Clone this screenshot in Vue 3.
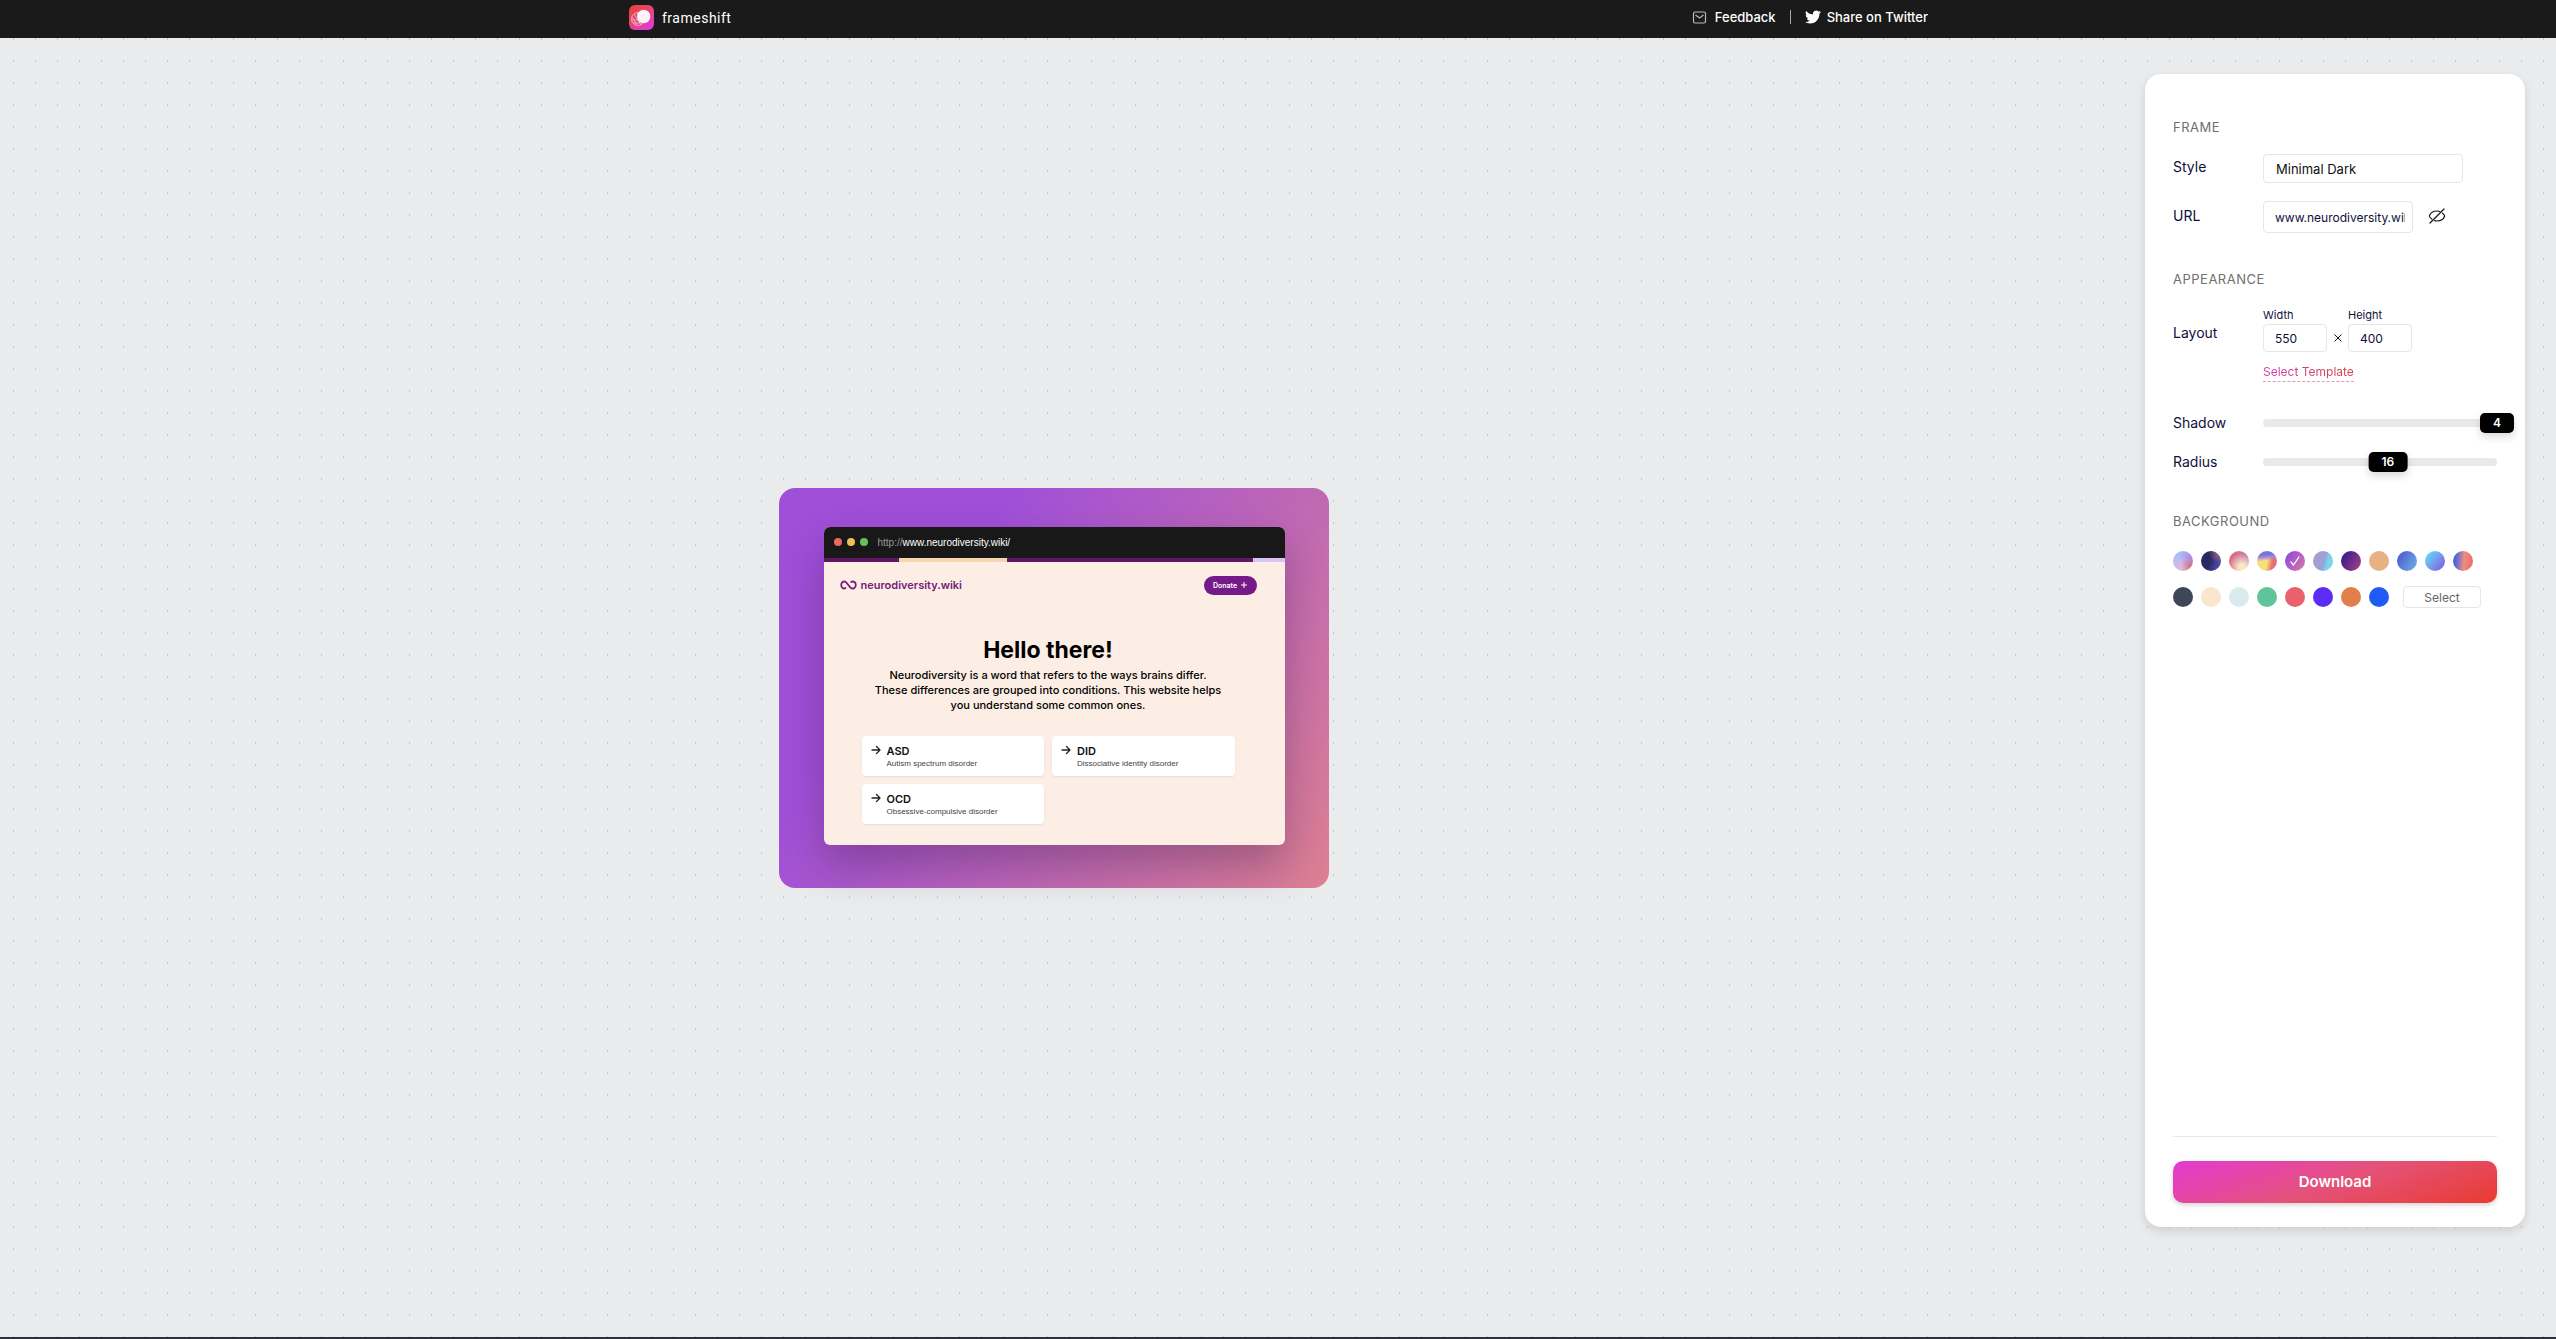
<script setup>
import { ref, computed } from 'vue'

const frameStyle = ref('Minimal Dark')
const url = ref('www.neurodiversity.wiki/')
const width = ref(550)
const height = ref(400)
const shadow = ref(4)
const radius = ref(16)
const picked = ref('grape')

const gradients = [
  { id: 'mist', label: 'Mist' },
  { id: 'night', label: 'Night' },
  { id: 'rose', label: 'Rose' },
  { id: 'sunrise', label: 'Sunrise' },
  { id: 'grape', label: 'Grape' },
  { id: 'lagoon', label: 'Lagoon' },
  { id: 'plum', label: 'Plum' },
  { id: 'sand', label: 'Sand' },
  { id: 'ocean', label: 'Ocean' },
  { id: 'sky', label: 'Sky' },
  { id: 'coral', label: 'Coral' }
]
const solids = [
  { id: 'slate', label: 'Slate' },
  { id: 'cream', label: 'Cream' },
  { id: 'ice', label: 'Ice' },
  { id: 'mint', label: 'Mint' },
  { id: 'red', label: 'Red' },
  { id: 'violet', label: 'Violet' },
  { id: 'orange', label: 'Orange' },
  { id: 'blue', label: 'Blue' }
]
const conditions = [
  { name: 'ASD', text: 'Autism spectrum disorder' },
  { name: 'DID', text: 'Dissociative identity disorder' },
  { name: 'OCD', text: 'Obsessive-compulsive disorder' }
]
const shadowLeft = computed(() => (shadow.value / 4) * 100 + '%')
const radiusLeft = computed(() => (radius.value / 30) * 100 + '%')
const cardSize = computed(() => ({ width: width.value + 'px', minHeight: height.value + 'px' }))
</script>

<template>
  <div class="app">
    <header class="top">
      <div class="top-inner">
        <a class="brand" href="#">
          <svg width="25" height="25" viewBox="0 0 25 25" aria-hidden="true">
            <defs>
              <linearGradient id="brand-fill" x1="0" y1="0" x2="0.7" y2="1">
                <stop offset="0" stop-color="#e83f34" />
                <stop offset="0.5" stop-color="#e4486f" />
                <stop offset="1" stop-color="#e03bd2" />
              </linearGradient>
            </defs>
            <rect width="25" height="25" rx="6" fill="url(#brand-fill)" />
            <g fill="none" stroke="#f6b9c0" stroke-width="0.8">
              <circle cx="9" cy="14" r="6.5" />
              <path d="M3 12l5 8M5 9l7 11M8 8l7 10M3 15h7M4 18h9" />
            </g>
            <circle cx="14.700" cy="11.500" r="6.700" fill="#fff" fill-opacity="0.930" />
          </svg>
          <span>frameshift</span>
        </a>
        <nav class="links">
          <a href="#">
            <svg width="15" height="15" viewBox="0 0 15 15" fill="none" stroke="#b9b9b9" stroke-width="1.200" aria-hidden="true">
              <rect x="1.500" y="2" width="12" height="11" rx="1.500" />
              <path d="M3.500 5l4 3 4-3" />
            </svg>
            <span>Feedback</span>
          </a>
          <i class="bar"></i>
          <a href="#">
            <svg width="16" height="16" viewBox="0 0 24 24" fill="#fff" aria-hidden="true">
              <path d="M23.953 4.570a10 10 0 01-2.825.775 4.958 4.958 0 002.163-2.723c-.951.555-2.005.959-3.127 1.184a4.920 4.920 0 00-8.384 4.482C7.690 8.095 4.067 6.130 1.640 3.162a4.822 4.822 0 00-.666 2.475c0 1.710.870 3.213 2.188 4.096a4.904 4.904 0 01-2.228-.616v.060a4.923 4.923 0 003.946 4.827 4.996 4.996 0 01-2.212.085 4.936 4.936 0 004.604 3.417 9.867 9.867 0 01-6.102 2.105c-.390 0-.779-.023-1.170-.067a13.995 13.995 0 007.557 2.209c9.053 0 13.998-7.496 13.998-13.985 0-.210 0-.420-.015-.630A9.935 9.935 0 0024 4.590z" />
            </svg>
            <span>Share on Twitter</span>
          </a>
        </nav>
      </div>
    </header>

    <main class="work">
      <section class="stage">
        <div class="card" :style="cardSize">
          <div class="window">
            <div class="titlebar">
              <i class="dot close"></i><i class="dot min"></i><i class="dot max"></i>
              <span class="address"><span class="scheme">http://</span>www.neurodiversity.wiki/</span>
            </div>
            <div class="stripe"><i class="s1"></i><i class="s2"></i><i class="s3"></i><i class="s4"></i></div>
            <div class="site">
              <div class="site-top">
                <div class="site-brand">
                  <svg width="17" height="10" viewBox="0 0 17 10" fill="none" stroke="#74207c" stroke-width="1.800" stroke-linecap="round" aria-hidden="true">
                    <path d="M5.500 8C3.500 9.300 1.200 8 1.200 5s2.300-4.300 4.500-3C7.700 3.200 9 6.800 11 8c2.200 1.300 4.800 0 4.800-3s-2.600-4.300-4.600-3" />
                  </svg>
                  <span>neurodiversity.wiki</span>
                </div>
                <button class="donate" type="button">Donate
                  <svg width="6" height="6" viewBox="0 0 6 6" stroke="#fff" stroke-width="1" aria-hidden="true"><path d="M3 0v6M0 3h6" /></svg>
                </button>
              </div>
              <h1>Hello there!</h1>
              <p class="lead">Neurodiversity is a word that refers to the ways brains differ.<br>These differences are grouped into conditions. This website helps<br>you understand some common ones.</p>
              <div class="tiles">
                <article v-for="c in conditions" :key="c.name" class="tile">
                  <svg width="10" height="10" viewBox="0 0 10 10" fill="none" stroke="#222" stroke-width="1.300" stroke-linecap="round" stroke-linejoin="round" aria-hidden="true">
                    <path d="M1 5h8M5.500 1.500L9 5 5.500 8.500" />
                  </svg>
                  <div>
                    <h2>{{ c.name }}</h2>
                    <p>{{ c.text }}</p>
                  </div>
                </article>
              </div>
            </div>
          </div>
        </div>
      </section>

      <aside class="panel">
        <section class="group frame">
          <h3>FRAME</h3>
          <div class="row style-row">
            <label for="style">Style</label>
            <select id="style" v-model="frameStyle"><option>Minimal Dark</option></select>
          </div>
          <div class="row url-row">
            <label for="url">URL</label>
            <input id="url" v-model="url" type="text">
            <button class="eye" type="button" aria-label="Hide URL">
              <svg width="18" height="16" viewBox="0 0 18 16" fill="none" stroke="#151515" stroke-width="1.200" stroke-linecap="round" aria-hidden="true">
                <path d="M2 15L16 1" />
                <path d="M3.800 11C2.500 10 1.500 9 1.300 8 2.500 4.700 5.500 3 9 3c1 0 2 .200 2.800.500M14.500 5.200C15.700 6 16.500 7 16.700 8c-1.200 3.300-4.200 5-7.700 5-.900 0-1.700-.100-2.400-.300" />
              </svg>
            </button>
          </div>
        </section>

        <section class="group look">
          <h3>APPEARANCE</h3>
          <div class="row layout-row">
            <span class="name">Layout</span>
            <div>
              <div class="sizes">
                <div class="field"><label for="w">Width</label><input id="w" v-model="width" type="text"></div>
                <svg class="times" width="8" height="8" viewBox="0 0 8 8" stroke="#151515" stroke-width="1" aria-hidden="true"><path d="M0.500 0.500l7 7M7.500 0.500l-7 7" /></svg>
                <div class="field"><label for="h">Height</label><input id="h" v-model="height" type="text"></div>
              </div>
              <a class="template" href="#">Select Template</a>
            </div>
          </div>
          <div class="row slider-row">
            <label for="shadow">Shadow</label>
            <div class="slider">
              <input id="shadow" v-model="shadow" type="range" min="0" max="4">
              <output class="knob" :style="{ left: shadowLeft }">{{ shadow }}</output>
            </div>
          </div>
          <div class="row slider-row">
            <label for="radius">Radius</label>
            <div class="slider">
              <input id="radius" v-model="radius" type="range" min="0" max="30">
              <output class="knob" :style="{ left: radiusLeft }">{{ radius }}</output>
            </div>
          </div>
        </section>

        <section class="group">
          <h3>BACKGROUND</h3>
          <div class="swatches">
            <button v-for="g in gradients" :key="g.id" type="button" :class="['swatch', g.id]" :aria-label="g.label" @click="picked = g.id">
              <svg v-if="picked === g.id" width="10" height="10" viewBox="0 0 10 10" fill="none" stroke="#fff" stroke-width="1.300" stroke-linecap="round" stroke-linejoin="round" aria-hidden="true"><path d="M1 6l2.500 3L9 1" /></svg>
            </button>
          </div>
          <div class="swatches solids">
            <button v-for="s in solids" :key="s.id" type="button" :class="['swatch', s.id]" :aria-label="s.label" @click="picked = s.id"></button>
            <button class="pick" type="button">Select</button>
          </div>
        </section>

        <footer class="actions">
          <button class="download" type="button">Download</button>
        </footer>
      </aside>
    </main>
  </div>
</template>

<style>
html,
body,
#app {
  height: 100%;
}
body {
  margin: 0;
}
</style>

<style scoped>
* {
  box-sizing: border-box;
}
.app {
  display: flex;
  flex-direction: column;
  min-height: 100%;
  border-bottom: 2px solid #2f2f3a;
  background: #eaebed;
  color: #10103a;
  font-family: Inter, "Liberation Sans", sans-serif;
  font-size: 14px;
}
button,
input,
select {
  font: inherit;
  color: inherit;
}
button {
  padding: 0;
  border: 0;
}
a {
  color: inherit;
  text-decoration: none;
}
h1,
h2,
h3,
p {
  margin: 0;
}
.top {
  height: 38px;
  padding-bottom: 3px;
  background: #1a1a1a;
  color: #fff;
}
.top-inner {
  display: flex;
  align-items: center;
  justify-content: space-between;
  max-width: 1300px;
  height: 100%;
  margin: 0 auto;
}
.brand,
.links,
.links a {
  display: flex;
  align-items: center;
}
.brand {
  gap: 8px;
  padding-left: 1px;
  font-family: Roboto, sans-serif;
  letter-spacing: 0.5px;
}
.links {
  padding-bottom: 1px;
  font-size: 13px;
  font-weight: 500;
}
.links a {
  gap: 8px;
}
.links a:last-child {
  gap: 6px;
}
.bar {
  width: 1px;
  height: 14px;
  margin: 0 14px;
  background: #aaa;
}
.work {
  display: flex;
  flex: 1;
  background-image: conic-gradient(from 270deg at 1px 2px, #c6c7ca 90deg, transparent 90deg);
  background-position: 13px 0;
  background-size: 22px 22px;
}
.stage {
  display: flex;
  flex: 1;
  align-items: center;
  justify-content: center;
}
.card {
  display: flex;
  align-items: center;
  justify-content: center;
  border-radius: 16px;
  background: linear-gradient(125deg, #a04fd8 0%, #a04fd8 28%, #dd8092 100%);
}
.window {
  width: 461px;
  margin-bottom: 4px;
  overflow: hidden;
  border-radius: 6px;
  background: #fceee4;
  box-shadow: 0 20px 40px rgba(40, 20, 60, 0.3);
  color: #111;
}
.titlebar {
  display: flex;
  align-items: center;
  gap: 5px;
  height: 31px;
  padding-left: 10px;
  background: #181818;
}
.dot {
  width: 8px;
  height: 8px;
  border-radius: 50%;
}
.close { background: #ea6a5f; }
.min { background: #f0bd5c; }
.max { background: #62c554; }
.address {
  margin-left: 5px;
  color: #fff;
  font-size: 10px;
  font-family: "Liberation Sans", sans-serif;
}
.scheme { color: #999; }
.stripe {
  display: flex;
  height: 4px;
}
.s1 { flex: 75; background: #5d1766; }
.s2 { flex: 108; background: #f7d5b0; }
.s3 { flex: 246; background: #5d1766; }
.s4 { flex: 32; background: #dac4f3; }
.site {
  padding: 14px 50px 21px 38px;
}
.site-top {
  display: flex;
  align-items: center;
  justify-content: space-between;
  margin: 0 -22px;
}
.site-brand {
  display: flex;
  align-items: center;
  gap: 4px;
  color: #74207c;
  font-size: 11px;
  font-weight: 600;
}
.donate {
  display: flex;
  align-items: center;
  justify-content: center;
  gap: 4px;
  width: 53px;
  height: 19px;
  border-radius: 10px;
  background: #771a89;
  color: #fff;
  font-size: 7px;
  font-weight: 600;
}
h1 {
  margin: 41px 0 4px;
  color: #000;
  font-size: 23px;
  font-weight: 700;
  line-height: 28px;
  text-align: center;
}
.lead {
  color: #000;
  font-size: 11px;
  font-weight: 500;
  line-height: 15px;
  text-align: center;
  white-space: nowrap;
}
.tiles {
  display: grid;
  grid-template-columns: 1fr 1fr;
  gap: 8px;
  margin-top: 23px;
}
.tile {
  display: flex;
  gap: 6px;
  height: 40px;
  padding: 9px 9px 0;
  border-radius: 4px;
  background: #fff;
  box-shadow: 0 1px 2px rgba(0, 0, 0, 0.08);
}
.tile h2 {
  font-size: 11px;
  font-weight: 600;
  line-height: 12px;
}
.tile p {
  color: #444;
  font-family: "Liberation Sans", sans-serif;
  font-size: 8px;
  line-height: 14px;
}
.panel {
  display: flex;
  flex-direction: column;
  width: 380px;
  margin: 36px 31px 110px 37px;
  padding: 45px 28px 24px;
  border-radius: 16px;
  background: #fff;
  box-shadow: 0 4px 10px rgba(0, 0, 0, 0.12);
}
h3 {
  color: #6f6f6f;
  font-size: 13px;
  font-weight: 400;
  line-height: 16px;
  letter-spacing: 0.5px;
}
.row {
  display: grid;
  grid-template-columns: 90px 1fr;
  align-items: center;
}
.style-row {
  margin-top: 19px;
}
.style-row label,
.url-row label {
  padding-bottom: 4px;
}
.style-row select {
  width: 200px;
  height: 29px;
  padding: 1px 12px 0;
  border: 1px solid #e6e6e8;
  border-radius: 4px;
  appearance: none;
  background: #fff;
  color: #111;
  font-size: 13px;
}
.url-row {
  grid-template-columns: 90px 150px auto 1fr;
  margin-top: 18px;
}
.url-row input {
  width: 150px;
  height: 32px;
  padding: 1px 7px 0 11px;
  border: 1px solid #e6e6e8;
  border-radius: 4px;
  font-size: 12px;
}
.eye {
  display: flex;
  margin: 0 0 2px 15px;
  background: none;
}
.look {
  margin: 38px 0 41px;
}
.layout-row {
  margin-top: 22px;
}
.name {
  padding-bottom: 26px;
}
.sizes {
  display: flex;
  align-items: flex-end;
}
.field {
  display: flex;
  flex-direction: column;
  gap: 2px;
  width: 64px;
}
.field label {
  font-size: 11px;
  line-height: 13px;
}
.field input {
  height: 28px;
  padding: 1px 11px 0;
  border: 1px solid #e6e6e8;
  border-radius: 4px;
  font-size: 12px;
}
.times {
  margin: 0 6px 10px 7px;
}
.template {
  display: inline-block;
  margin-top: 11px;
  border-bottom: 1px dashed #e39ab5;
  background: linear-gradient(90deg, #cf3db4, #d2443f);
  background-clip: text;
  color: transparent;
  font-size: 12px;
  line-height: 18px;
}
.slider-row {
  height: 20px;
  margin-top: 19px;
}
.slider-row label {
  padding-bottom: 1px;
}
.layout-row + .slider-row {
  margin-top: 31px;
}
.slider {
  position: relative;
  height: 8px;
}
.slider input {
  display: block;
  width: 100%;
  height: 8px;
  margin: 0;
  border-radius: 4px;
  appearance: none;
  background: #e9e9e9;
}
.slider input::-webkit-slider-thumb {
  width: 34px;
  height: 20px;
  appearance: none;
  opacity: 0;
}
.knob {
  position: absolute;
  top: 50%;
  padding: 0 13px;
  border-radius: 5px;
  background: #000;
  box-shadow: 0 4px 8px rgba(0, 0, 0, 0.15);
  color: #fff;
  font-size: 12px;
  font-weight: 600;
  line-height: 20px;
  transform: translate(-50%, -50%);
  pointer-events: none;
}
.swatches {
  display: flex;
  align-items: center;
  gap: 8px;
  height: 22px;
  margin-top: 21px;
}
.solids {
  margin-top: 14px;
}
.swatch {
  display: flex;
  align-items: center;
  justify-content: center;
  width: 20px;
  height: 20px;
  border-radius: 50%;
}
.mist { background: radial-gradient(circle at 95% 80%, #c66a72, transparent 45%), radial-gradient(circle at 90% 25%, #a88cf0, transparent 50%), linear-gradient(160deg, #8fc8f0, #d5b6ee 60%, #efc3b0); }
.night { background: radial-gradient(circle at 90% 10%, #a06a80, transparent 40%), linear-gradient(110deg, #27295f 45%, #5b56c8 100%); }
.rose { background: radial-gradient(circle at 65% 80%, #f8e8c8 15%, transparent 65%), linear-gradient(90deg, #e4687e, #c37fb4); }
.sunrise { background: linear-gradient(175deg, #7672dc 20%, #a58ad8 32%, transparent 48%), linear-gradient(100deg, #f7df79 50%, #e56f74 75%); }
.grape { background: linear-gradient(125deg, #9a4dd8 20%, #d97ca0); }
.lagoon { background: linear-gradient(105deg, #ab9bd0 20%, #98a4d8 55%, #79d5ea 70%); }
.plum { background: linear-gradient(120deg, #41208a 20%, #ad4187); }
.sand { background: #e8b184; }
.ocean { background: linear-gradient(120deg, #4f61d0 15%, #6fb4e8); }
.sky { background: linear-gradient(130deg, #62d4f5 15%, #8269e4 85%); }
.coral { background: linear-gradient(95deg, #4a66dc 15%, #ee8d80 55%, #ea6c62); }
.slate { background: #3e4757; }
.cream { background: #fae5cd; }
.ice { background: #daeaef; }
.mint { background: #60c399; }
.red { background: #e8616d; }
.violet { background: #5c2bf5; }
.orange { background: #e07f49; }
.blue { background: #1f5cf7; }
.pick {
  width: 78px;
  height: 22px;
  margin-left: 6px;
  border: 1px solid #e6e6e8;
  border-radius: 4px;
  background: #fff;
  color: #666;
  font-size: 12px;
}
.actions {
  margin-top: auto;
  padding-top: 24px;
  border-top: 1px solid #e8e8e8;
}
.download {
  width: 100%;
  height: 42px;
  padding-bottom: 1px;
  border-radius: 10px;
  background: linear-gradient(160deg, #e43ad2, #e4527a 50%, #e93b30);
  box-shadow: 0 2px 5px rgba(0, 0, 0, 0.18);
  color: #fff;
  font-size: 15px;
  font-weight: 600;
}
</style>
